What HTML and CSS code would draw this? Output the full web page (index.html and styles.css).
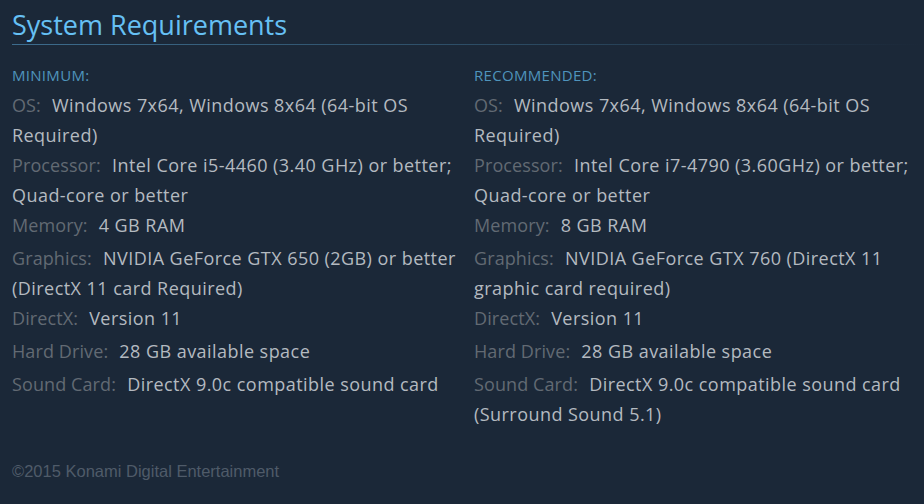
FILE: index.html
```html
<!DOCTYPE html>
<html lang="en">
<head>
    <meta charset="UTF-8">
    <meta name="viewport" content="width=device-width, initial-scale=1.0">
    <title>System Requirements</title>
    <link rel="stylesheet" href="styles.css">
</head>
<body>
    <div class="sysreq">
        <h2 class="title">System Requirements</h2>
        <div class="columns">
            <div class="col">
                <div class="col-head">MINIMUM:</div>
                <ul>
                    <li><span class="lbl">OS:</span> Windows 7x64, Windows 8x64 (64-bit OS Required)</li>
                    <li><span class="lbl">Processor:</span> Intel Core i5-4460 (3.40 GHz) or better; Quad-core or better</li>
                    <li class="one"><span class="lbl">Memory:</span> 4 GB RAM</li>
                    <li><span class="lbl">Graphics:</span> NVIDIA GeForce GTX 650 (2GB) or better (DirectX 11 card Required)</li>
                    <li class="one"><span class="lbl">DirectX:</span> Version 11</li>
                    <li class="one"><span class="lbl">Hard Drive:</span> 28 GB available space</li>
                    <li class="one"><span class="lbl">Sound Card:</span> DirectX 9.0c compatible sound card</li>
                </ul>
            </div>
            <div class="col">
                <div class="col-head">RECOMMENDED:</div>
                <ul>
                    <li><span class="lbl">OS:</span> Windows 7x64, Windows 8x64 (64-bit OS Required)</li>
                    <li><span class="lbl">Processor:</span> Intel Core i7-4790 (3.60GHz) or better; Quad-core or better</li>
                    <li class="one"><span class="lbl">Memory:</span> 8 GB RAM</li>
                    <li><span class="lbl">Graphics:</span> NVIDIA GeForce GTX 760 (DirectX 11 graphic card required)</li>
                    <li class="one"><span class="lbl">DirectX:</span> Version 11</li>
                    <li class="one"><span class="lbl">Hard Drive:</span> 28 GB available space</li>
                    <li class="one"><span class="lbl">Sound Card:</span> DirectX 9.0c compatible sound card (Surround Sound 5.1)</li>
                </ul>
            </div>
        </div>
        <p class="legal">&copy;2015 Konami Digital Entertainment</p>
    </div>
</body>
</html>
```

FILE: styles.css
```css
body {
    margin: 0;
    background-color: #1b2838;
    font-family: "Open Sans", "Noto Sans", sans-serif;
    color: #acb2b8;
}
.sysreq {
    padding: 6px 0 0 12px;
}
.title {
    margin: 0;
    padding-bottom: 1px;
    font-size: 27px;
    font-weight: normal;
    line-height: 38px;
    color: #66c0f4;
    background-image: linear-gradient(to right, #3d6c8d 0%, #2a475e 60%, rgba(42, 71, 94, 0) 100%);
    background-size: 100% 1px;
    background-repeat: no-repeat;
    background-position: left bottom;
}
.columns {
    display: flex;
    gap: 6px;
    margin-top: 15px;
}
.col {
    width: 456px;
    flex: none;
}
.col-head {
    font-size: 15px;
    line-height: 30px;
    letter-spacing: 0.3px;
    color: #4f94bc;
}
ul {
    list-style: none;
    margin: 0;
    padding: 0;
}
li {
    font-size: 18px;
    line-height: 30px;
    letter-spacing: 0.45px;
    color: #b4bac0;
}
li.one {
    margin-bottom: 3px;
}
.lbl {
    color: #626a73;
    letter-spacing: 0.1px;
    margin-right: 6px;
}
.legal {
    margin: 30px 0 0;
    font-family: "Liberation Sans", Arial, sans-serif;
    font-size: 16.5px;
    color: #4f5b69;
}
```
